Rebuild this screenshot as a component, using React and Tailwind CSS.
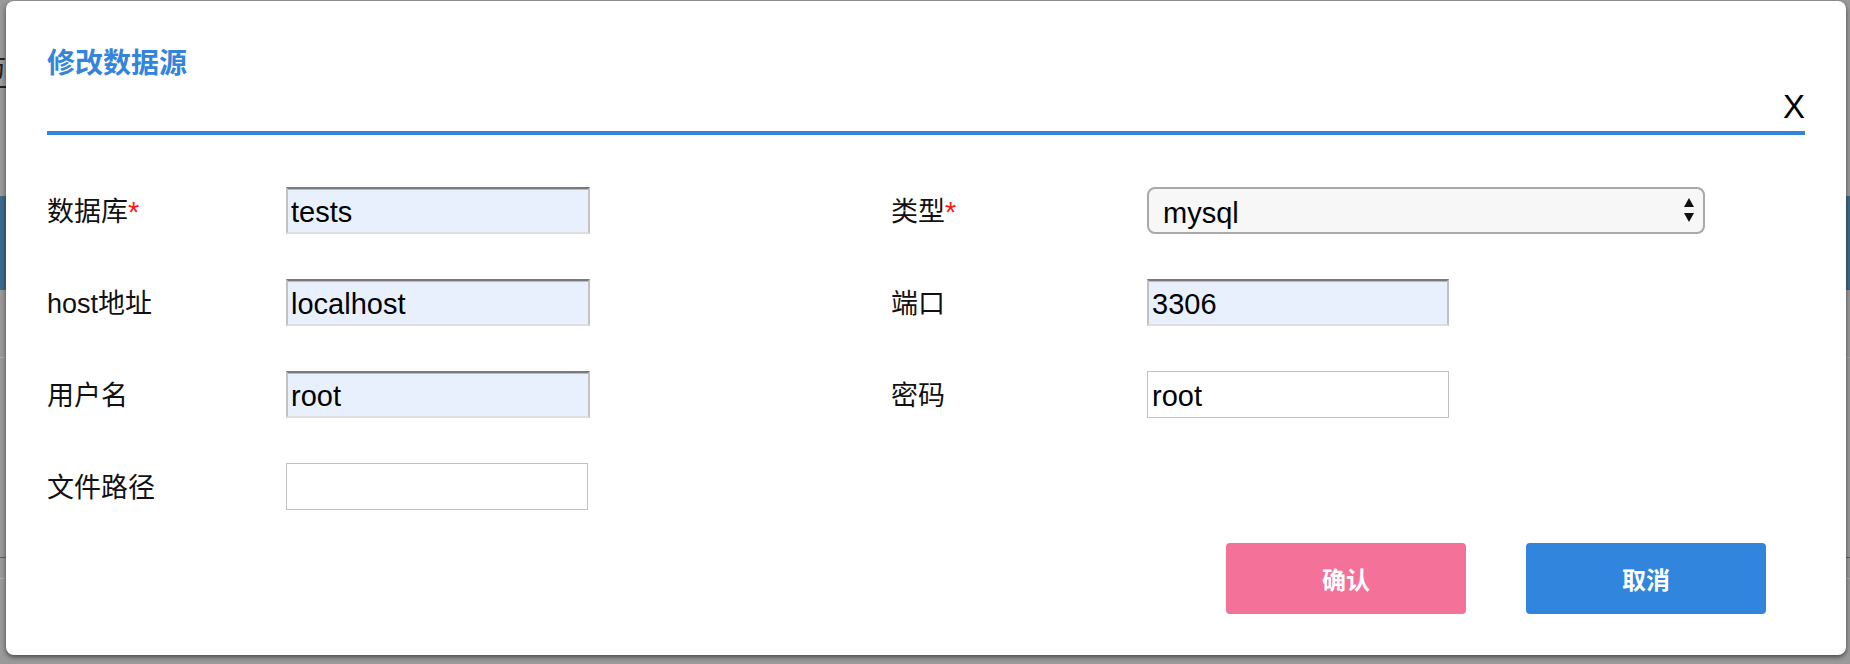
import { useState } from "react";

const labelFont = { fontFamily: '"Liberation Sans", "Noto Sans CJK SC", sans-serif' };

// autofilled inputs have the old inset look
const filled =
  "h-[47px] border-2 border-t-[#7a7a7a] border-x-[#c2c2c2] border-b-[#dedede] bg-[#e8f0fe] pl-[3px] pt-[3px] text-[29px] text-black outline-none shadow-[inset_0_1px_0_#b9b9b9]";
const plain =
  "h-[47px] border border-[#c2c2c2] bg-white pl-[4px] pt-[3px] text-[29px] text-black outline-none";

function Label({ text, required }) {
  return (
    <div className="flex items-center pt-[4px] text-[27px] text-[#111]">
      {text}
      {required && <span className="text-[29px] text-[#ff1a1a]">*</span>}
    </div>
  );
}

function Arrows() {
  return (
    <svg width="12" height="26" viewBox="0 0 12 26" className="pointer-events-none">
      <path d="M6 1 L11 10 L1 10 Z" fill="#111" />
      <path d="M1 16 L11 16 L6 25 Z" fill="#111" />
    </svg>
  );
}

export default function App() {
  const [form, setForm] = useState({
    db: "tests",
    type: "mysql",
    host: "localhost",
    port: "3306",
    user: "root",
    pwd: "root",
    path: "",
  });
  const set = (k) => (e) => setForm({ ...form, [k]: e.target.value });

  return (
    <div className="relative h-[664px] w-full overflow-hidden bg-[#9a9a9a]" style={labelFont}>
      {/* page behind the overlay */}
      <div className="flex h-[196px] flex-col">
        <div className="ml-[-22px] mt-[50px] w-fit border-b-2 border-[#222] text-[28px] leading-[36px] text-[#222]">
          访问
        </div>
      </div>
      <div className="h-[94px] bg-[#3e6a8b]" />
      <div className="h-[68px] border-b border-[#aaaaaa]" />
      <div className="h-[200px] border-b border-[#41698c]" />
      <div className="h-[21px] border-b border-[#adadad]" />

      {/* dialog */}
      <div className="absolute left-[6px] top-[1px] flex h-[654px] w-[1840px] flex-col rounded-lg bg-white shadow-[0_2px_5px_rgba(0,0,0,0.55)]">
        <div className="mx-[41px] flex h-[134px] justify-between border-b-4 border-[#3385db]">
          <h2
            className="mt-[42px] self-start text-[28px] font-bold leading-[36px] text-[#3385db]"
            style={{ fontFamily: '"Noto Sans CJK SC", sans-serif' }}
          >
            修改数据源
          </h2>
          <button className="mb-[8px] self-end text-[33px] leading-none text-black">X</button>
        </div>

        <div className="ml-[41px] mt-[52px] grid grid-cols-[239px_605px_256px_558px] grid-rows-[47px_47px_47px_47px] gap-y-[45px]">
          <Label text="数据库" required />
          <input className={`${filled} w-[304px]`} value={form.db} onChange={set("db")} />
          <Label text="类型" required />
          <div className="relative flex h-[47px] w-[558px] items-center">
            <select
              className="h-full w-full appearance-none rounded-lg border-2 border-[#a9a9a9] bg-[#f7f7f7] pl-[14px] pt-[3px] text-[29px] text-black outline-none"
              value={form.type}
              onChange={set("type")}
            >
              <option value="mysql">mysql</option>
              <option value="sqlite">sqlite</option>
              <option value="postgresql">postgresql</option>
            </select>
            <span className="absolute right-[10px] top-[10px]">
              <Arrows />
            </span>
          </div>

          <Label text="host地址" />
          <input className={`${filled} w-[304px]`} value={form.host} onChange={set("host")} />
          <Label text="端口" />
          <input className={`${filled} w-[302px]`} value={form.port} onChange={set("port")} />

          <Label text="用户名" />
          <input className={`${filled} w-[304px]`} value={form.user} onChange={set("user")} />
          <Label text="密码" />
          <input className={`${plain} w-[302px]`} value={form.pwd} onChange={set("pwd")} />

          <Label text="文件路径" />
          <input className={`${plain} w-[302px]`} value={form.path} onChange={set("path")} />
        </div>

        <div className="mt-[33px] flex justify-end gap-[60px] pr-[80px]">
          <button
            className="h-[71px] w-[240px] rounded-[4px] bg-[#f47199] text-[24px] font-bold text-white"
            style={{ fontFamily: '"Noto Sans CJK SC", sans-serif' }}
          >
            确认
          </button>
          <button
            className="h-[71px] w-[240px] rounded-[4px] bg-[#3285dc] text-[24px] font-bold text-white"
            style={{ fontFamily: '"Noto Sans CJK SC", sans-serif' }}
          >
            取消
          </button>
        </div>
      </div>
    </div>
  );
}
